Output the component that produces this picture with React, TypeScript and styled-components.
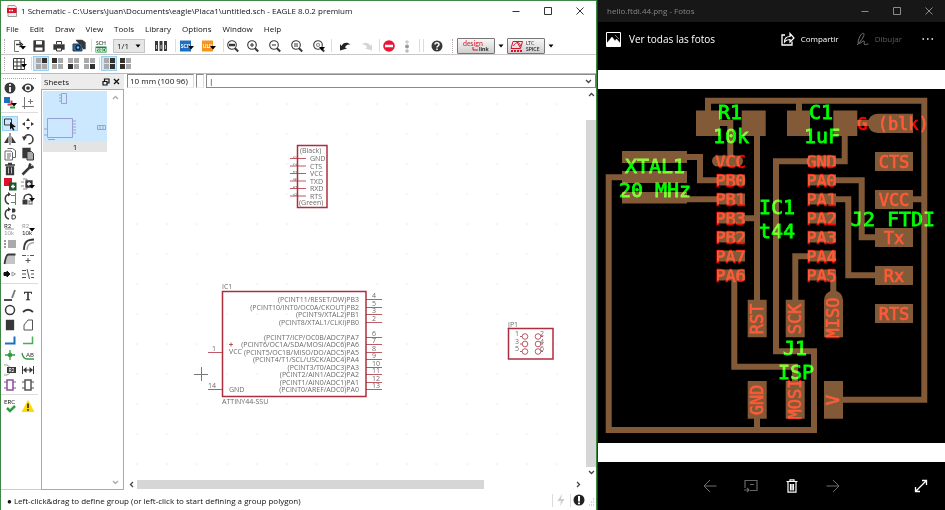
import React from "react";
import styled, { createGlobalStyle, css } from "styled-components";

const Global = createGlobalStyle`
  *, *::before, *::after { box-sizing: border-box; }
  body { margin: 0; background: #000; }
  button, input, select { font: inherit; color: inherit; margin: 0; padding: 0; border: 0; background: none; }
  svg { display: block; flex: none; }
`;

const Desktop = styled.div`
  display: grid;
  grid-template-columns: minmax(0, 597fr) minmax(0, 348fr);
  height: 100vh;
  font-family: "Open Sans", "Noto Sans", sans-serif;
  font-size: 8px;
  color: #111;
`;

/* ---------- Schematic editor window ---------- */

const Editor = styled.section`
  display: flex;
  flex-direction: column;
  min-width: 0;
  min-height: 0;
  background: #fff;
  border: 1px solid #3f8747;
  border-bottom: 0;
`;

const TitleBar = styled.header<{ $dark?: boolean }>`
  display: flex;
  align-items: center;
  height: ${(p) => (p.$dark ? 22 : 20)}px;
  flex: none;
  padding-left: ${(p) => (p.$dark ? 9 : 5)}px;
  background: ${(p) => (p.$dark ? "#171717" : "#fff")};
  color: ${(p) => (p.$dark ? "#858585" : "#111")};
`;

const Title = styled.h1<{ $first?: boolean }>`
  margin: 0 0 0 ${(p) => (p.$first ? 0 : 3)}px;
  flex: 1;
  min-width: 0;
  font-size: 8px;
  line-height: 16px;
  font-weight: 400;
  white-space: nowrap;
  overflow: hidden;
`;

const WindowButton = styled.button`
  display: grid;
  place-items: center;
  width: 32px;
  height: 20px;
`;

const MenuBar = styled.nav`
  display: flex;
  align-items: center;
  gap: 11px;
  height: 16px;
  flex: none;
  padding-left: 5px;
`;

const MenuItem = styled.button`
  font-size: 8px;
  line-height: 16px;
`;

const ToolBar = styled.div<{ $line?: boolean }>`
  display: flex;
  align-items: center;
  flex: none;
  height: 18px;
  border-bottom: 1px solid ${(p) => (p.$line ? "#c8c8c8" : "transparent")};
`;

const Grip = styled.span`
  width: 1px;
  height: 14px;
  margin: 0 4px 0 3px;
  border-left: 1px dotted #b5a5ab;
`;

const Tool = styled.button<{ $w?: number; $on?: boolean }>`
  display: flex;
  align-items: center;
  justify-content: center;
  flex: none;
  width: ${(p) => p.$w ?? 20}px;
  height: 15px;
  ${(p) =>
    p.$on &&
    css`
      background: #cce8ff;
      box-shadow: inset 0 0 0 1px #99cfef;
    `}
`;

const Rule = styled.span`
  flex: none;
  width: 1px;
  height: 13px;
  margin: 0 1px 0 2px;
  background: #dcdcdc;
`;

const SheetPicker = styled.label`
  display: flex;
  align-items: center;
  width: 32px;
  height: 14px;
  margin: 0 4px;
  padding: 0 3px;
  background: #e6e6e6;
  border: 1px solid #c4c4c4;
  select {
    appearance: none;
    flex: 1;
    min-width: 0;
    font-size: 8px;
    line-height: 12px;
  }
`;

const LinkButton = styled.button`
  display: grid;
  place-items: center;
  width: 38px;
  height: 16px;
  background: linear-gradient(#f7f7f7, #cfcfcf);
  border: 1px solid #777;
  border-radius: 1px;
`;

const Work = styled.div`
  display: grid;
  grid-template-columns: 40px 83px minmax(0, 1fr);
  flex: 1;
  min-height: 0;
  border-top: 1px solid #bbb;
`;

const Palette = styled.aside`
  padding: 4px 3px 0 0;
  border-bottom: 1px solid #ccc;
`;

const PaletteGrip = styled.div`
  height: 2px;
  margin: 0 2px;
  border-top: 1px dotted #b5a5ab;
`;

const PaletteGroup = styled.div`
  display: grid;
  grid-template-columns: 18px 18px;
  grid-auto-rows: 15px;
  & + & {
    margin-top: 2px;
    padding-top: 3px;
    border-top: 1px solid #dcdcdc;
  }
  button {
    width: 16px;
    justify-self: center;
  }
`;

const Sheets = styled.aside`
  display: flex;
  flex-direction: column;
  min-height: 0;
`;

const SheetsHead = styled.h2`
  display: flex;
  align-items: center;
  flex: none;
  height: 15px;
  margin: 0;
  padding: 0 2px 0 3px;
  background: #ececec;
  font-size: 8px;
  line-height: 14px;
  font-weight: 400;
  span { flex: 1; }
  button { width: 11px; display: grid; place-items: center; }
`;

const SheetsBody = styled.div`
  display: flex;
  justify-content: space-between;
  flex: 1;
  min-height: 0;
  padding: 1px;
  border: 1px solid #aaa;
`;

const SheetThumb = styled.button`
  align-self: flex-start;
  width: 64px;
  background: #e4e4e4;
  font-size: 8px;
  line-height: 11px;
  svg { background: #cce8ff; }
`;

const ArrowColumn = styled.div`
  display: flex;
  flex-direction: column;
  justify-content: space-between;
  align-items: center;
  width: 14px;
  padding: 3px 0 2px;
`;

const Drawing = styled.div`
  display: flex;
  flex-direction: column;
  min-width: 0;
  min-height: 0;
`;

const CommandRow = styled.div`
  display: flex;
  flex: none;
  gap: 2px;
  height: 15px;
  padding: 0 0 1px 3px;
`;

const Readout = styled.output<{ $w: number }>`
  width: ${(p) => p.$w}px;
  flex: none;
  padding-left: 2px;
  border: 1px solid #888;
  border-right-color: #ddd;
  border-bottom-color: #eee;
  font-size: 8px;
  line-height: 12px;
  white-space: nowrap;
`;

const Command = styled.label`
  display: flex;
  align-items: center;
  flex: 1;
  min-width: 0;
  padding: 0 3px 0 2px;
  border: 1px solid #8a8a8a;
  border-right-color: #4a9a4a;
  input { flex: 1; min-width: 0; font-size: 8px; line-height: 12px; outline: 0; }
`;

const CanvasRow = styled.div`
  display: flex;
  flex: 1;
  min-height: 0;
`;

const Sheet = styled.svg`
  flex: 1 1 0;
  min-width: 0;
  height: 100%;
  overflow: hidden;
  font-family: "Open Sans", "Noto Sans", sans-serif;
  font-size: 7px;
`;

const VScroll = styled.div`
  display: flex;
  flex-direction: column;
  align-items: center;
  width: 10px;
  padding: 2px 0 3px;
`;

const VThumb = styled.div`
  flex: 1;
  width: 10px;
  margin: 22px 0 2px;
  background: #d6d6d6;
`;

const HScroll = styled.div`
  display: flex;
  align-items: center;
  flex: none;
  height: 11px;
  padding: 0 14px 0 4px;
`;

const HTrack = styled.div`
  flex: 1;
  height: 9px;
  margin: 0 4px 0 2px;
`;

const HThumb = styled.div`
  width: 80%;
  height: 9px;
  background: #d6d6d6;
`;

const StatusBar = styled.footer`
  display: flex;
  align-items: center;
  flex: none;
  height: 20px;
  padding-left: 6px;
  font-size: 8px;
  p { margin: 0; flex: 1; white-space: nowrap; overflow: hidden; }
`;

const ink = "#383838";
const blue = "#1e6fbf";
const green = "#2e9e3e";
const red = "#d8132b";

const Ico = ({ children, w = 14, h = 14 }: { children: React.ReactNode; w?: number; h?: number }) => (
  <svg
    width={w}
    height={h}
    viewBox={`0 0 ${w} ${h}`}
    fill="none"
    stroke={ink}
    strokeWidth="1.3"
    fontFamily="Lato, sans-serif"
    aria-hidden="true"
  >
    {children}
  </svg>
);

const Drop = ({ x = 8, y = 8 }: { x?: number; y?: number }) => (
  <path d={`M${x} ${y}h6l-3 3.5z`} fill="#000" stroke="none" />
);

const Caret = () => (
  <Ico w={6} h={4}>
    <path d="M0.5 0.5h5l-2.5 3z" fill="#000" stroke="none" />
  </Ico>
);

const Chevron = ({ dir, color = "#444" }: { dir: "up" | "down" | "left" | "right"; color?: string }) => {
  const d = {
    up: "M1 5l2.500-2.500 2.500 2.500",
    down: "M1 2l2.500 2.500 2.500-2.500",
    left: "M5 1l-2.500 2.500 2.500 2.500",
    right: "M2 1l2.500 2.500-2.500 2.500",
  }[dir];
  return (
    <Ico w={7} h={7}>
      <path d={d} stroke={color} />
    </Ico>
  );
};

const Lens = ({ children }: { children?: React.ReactNode }) => (
  <Ico>
    <circle cx="6" cy="6" r="4.300" fill="#fff" strokeWidth="1.100" />
    <path d="M9 9.300l3.200 3.200" strokeWidth="2" />
    <g strokeWidth="1.100">{children}</g>
  </Ico>
);

const Badge = ({ color, label }: { color: string; label: string }) => (
  <Ico w={16}>
    <path d="M1 1.500h11v11h-11z" fill={color} stroke="none" />
    <text x="6.500" y="9" fontSize="5" fontWeight="700" textAnchor="middle" fill="#fff" stroke="none">{label}</text>
    <Drop x={9} y={7} />
  </Ico>
);

const Quad = ({ dark }: { dark: number[] }) => (
  <Ico w={13} h={13}>
    {[0, 1, 2, 3].map((i) => (
      <rect
        key={i}
        x={1 + (i % 2) * 6}
        y={1 + Math.floor(i / 2) * 6}
        width="5"
        height="5"
        stroke="none"
        fill={dark.includes(i) ? "#303030" : "#a9a9a9"}
      />
    ))}
  </Ico>
);

const WindowControls = ({ color }: { color: string }) => (
  <>
    <WindowButton aria-label="Minimize"><Ico w={8} h={8}><path d="M0.500 4.500h7" stroke={color} strokeWidth="1" /></Ico></WindowButton>
    <WindowButton aria-label="Maximize"><Ico w={8} h={8}><path d="M0.500 0.500h7v7h-7z" stroke={color} strokeWidth="1" /></Ico></WindowButton>
    <WindowButton aria-label="Close"><Ico w={8} h={8}><path d="M0.500 0.500l7 7M7.500 0.500l-7 7" stroke={color} strokeWidth="1" /></Ico></WindowButton>
  </>
);

const ToolRowOne = () => (
  <ToolBar $line role="toolbar">
    <Grip />
    <Tool aria-label="Open">
      <Ico>
        <path d="M8 5V1.500H2.500v11H7" stroke="#777" strokeWidth="1" />
        <path d="M4 5.500h5M7.500 3l3 2.500-3 2.500" />
        <Drop x={8} y={7} />
      </Ico>
    </Tool>
    <Tool aria-label="Save">
      <Ico>
        <path d="M2 2h10v10H2z" fill={ink} strokeLinejoin="round" />
        <path d="M4 2h6v3.500H4zM3.500 8.500h7v3h-7z" fill="#fff" stroke="none" />
      </Ico>
    </Tool>
    <Tool aria-label="Print">
      <Ico>
        <path d="M2 6h10v4H2z" fill={ink} />
        <path d="M4.500 5V2.500h5V5M4.500 9h5v3h-5z" fill="#fff" strokeWidth="1" />
      </Ico>
    </Tool>
    <Tool aria-label="Export image">
      <Ico>
        <path d="M4 1.500h6l3 2v6h-2" fill={ink} stroke={ink} />
        <path d="M1 5h9v7H1z" fill={blue} stroke={ink} strokeWidth="1" />
        <circle cx="6" cy="8.500" r="2" fill="#79c7ef" stroke="#123" />
      </Ico>
    </Tool>
    <Rule />
    <Tool $w={16} aria-label="Board">
      <Ico>
        <text x="7" y="6" fontSize="5" fontWeight="700" textAnchor="middle" fill="#555" stroke="none">SCH</text>
        <path d="M1.500 7.500h11v6h-11z" fill="#16883a" stroke="none" />
        <text x="7" y="12.500" fontSize="5" fontWeight="700" textAnchor="middle" fill="#fff" stroke="none">BRD</text>
      </Ico>
    </Tool>
    <SheetPicker>
      <select aria-label="Sheet"><option>1/1</option></select>
      <Caret />
    </SheetPicker>
    <Tool $w={24} aria-label="Design manager">
      <Ico>
        {[1, 5.5, 10].map((x) => (
          <g key={x}>
            <path d={`M${x} 2h3v10h-3z`} fill={ink} stroke="none" />
            <path d={`M${x + 1} 6h1v4h-1z`} fill="#bbb" stroke="none" />
          </g>
        ))}
      </Ico>
    </Tool>
    <Rule />
    <Tool aria-label="Run script"><Badge color={blue} label="SCR" /></Tool>
    <Tool $w={24} aria-label="Run ULP"><Badge color="#f7941e" label="ULP" /></Tool>
    <Rule />
    <Tool $w={16} aria-label="Fit"><Lens><path d="M3 6h6" strokeWidth="2.500" /></Lens></Tool>
    <Tool $w={24} aria-label="Zoom in"><Lens><path d="M4 6h4M6 4v4" /></Lens></Tool>
    <Tool aria-label="Zoom out"><Lens><path d="M4 6h4" /></Lens></Tool>
    <Tool $w={24} aria-label="Redraw"><Lens><path d="M4 5h4M4 7h4" /></Lens></Tool>
    <Tool aria-label="Zoom select"><Lens><circle cx="6" cy="6" r="1.500" stroke="#888" /><Drop x={7} y={8} /></Lens></Tool>
    <Rule />
    <Tool $w={24} aria-label="Undo"><Ico><path d="M3.500 7C5 3.500 9 2.500 12.500 5.500 9.500 5 8 6 7 8.500l2 1-7 2L2 5z" fill="#222" stroke="none" /></Ico></Tool>
    <Tool aria-label="Redo"><Ico><path d="M10.500 7C9 3.500 5 2.500 1.500 5.500 4.500 5 6 6 7 8.500l-2 1 7 2L12 5z" fill="#d5d5d5" stroke="none" /></Ico></Tool>
    <Rule />
    <Tool $w={16} aria-label="Stop">
      <Ico><circle cx="7" cy="7" r="5.800" fill="#ea1635" stroke="none" /><path d="M3 7h8" stroke="#fff" strokeWidth="2.500" /></Ico>
    </Tool>
    <Tool aria-label="Traffic light">
      <Ico><circle cx="7" cy="3" r="1.800" fill="#ccc" stroke="none" /><circle cx="7" cy="7.500" r="2" fill="#999" stroke="none" /><circle cx="7" cy="12" r="1.800" fill="#bbb" stroke="none" /></Ico>
    </Tool>
    <Rule />
    <Rule />
    <Tool $w={24} aria-label="Help">
      <Ico><circle cx="7" cy="7" r="5.500" fill={ink} stroke="none" /><path d="M5 5.500c0-2.500 4-2.300 4 0 0 1.500-2 1.500-2 3M7 9.500v1.500" stroke="#fff" strokeWidth="1.500" /></Ico>
    </Tool>
    <Grip />
    <LinkButton aria-label="Design link">
      <Ico w={34} h={14}>
        <text x="4" y="7" fontSize="7" fill={red} stroke="none">design</text>
        <path d="M14 8v3h5" stroke={red} strokeWidth="1" />
        <text x="20" y="12" fontSize="6" fontWeight="700" fill="#222" stroke="none">link</text>
      </Ico>
    </LinkButton>
    <Tool $w={12} aria-label="Design link options"><Caret /></Tool>
    <LinkButton aria-label="LTC Spice">
      <Ico w={34} h={14}>
        <path d="M4 2.500h9.500l-2 7H2zM4.500 7C7 2 11 3 11.500 7M8 3l3.500 6" stroke={red} strokeWidth="1" />
        <path d="M2 12h11" stroke={red} strokeWidth="2" strokeDasharray="2 1" />
        <text x="17" y="6" fontSize="5" fill="#333" stroke="none">LTC</text>
        <text x="17" y="12" fontSize="5" fontWeight="700" fill="#333" stroke="none">SPICE</text>
      </Ico>
    </LinkButton>
    <Tool $w={12} aria-label="LTC Spice options"><Caret /></Tool>
  </ToolBar>
);

const ToolRowTwo = () => (
  <ToolBar role="toolbar">
    <Grip />
    <Tool aria-label="Grid">
      <Ico w={15}><path d="M1.500 1.500h11v11h-11zM1.500 5h11M1.500 9h11M5 1.500v11M9 1.500v11" strokeWidth="1" /><Drop x={9} y={7} /></Ico>
    </Tool>
    <Rule />
    <Tool $w={16} $on aria-label="Layer preset 1"><Quad dark={[1]} /></Tool>
    <Tool $w={16} aria-label="Layer preset 2"><Quad dark={[0]} /></Tool>
    <Tool $w={16} aria-label="Layer preset 3"><Quad dark={[2]} /></Tool>
    <Tool $w={16} aria-label="Layer preset 4"><Quad dark={[3]} /></Tool>
    <Rule />
    <Tool $w={16} $on aria-label="Layer preset 5"><Quad dark={[1, 3]} /></Tool>
    <Tool $w={16} aria-label="Layer preset 6"><Quad dark={[0, 2]} /></Tool>
  </ToolBar>
);

type PaletteItem = [string, React.ReactNode] | null;

const chip = (c: string) => (
  <g stroke={c} strokeWidth="1.200">
    <path d="M4 2h6v10H4z" strokeWidth="1.500" />
    <path d="M1 4h3M1 10h3M10 4h3M10 10h3" />
  </g>
);

const paletteGroups: PaletteItem[][] = [
  [
    ["Info", <><circle cx="7" cy="7" r="5.500" fill={ink} stroke="none" /><path d="M7 6v5M7 3v1.800" stroke="#fff" strokeWidth="1.800" /></>],
    ["Show", <><path d="M1.500 7c3-5 8-5 11 0-3 5-8 5-11 0z" fill={ink} /><circle cx="7" cy="7" r="2.500" fill={ink} stroke="#fff" /></>],
    ["Layers", <><path d="M1 1h6v6H1z" fill={blue} stroke="none" /><path d="M4.500 8.500h4v-4" stroke="#d8304f" strokeWidth="2" /><path d="M7 11.500h5" stroke={green} strokeWidth="2" /><Drop x={8} y={7} /></>],
    ["Mark", <path d="M3.500 1v12M1 10.500h12M9.500 3v5M7 5.500h5" stroke="#777" strokeWidth="1" />],
  ],
  [
    ["Group", <><path d="M1.500 2h7v6h-7z" strokeWidth="1" /><path d="M7 5l6 5-3 .3 1.500 2.700-1.500.5-1.200-2.600L7 12.500z" fill="#111" stroke="none" /></>],
    ["Move", <path d="M7 1l2 3H5zM7 13l2-3H5zM1 7l3-2v4zM13 7l-3-2v4z" fill={ink} stroke="none" />],
    ["Mirror", <><path d="M5.500 4v7H1zM8.500 4v7H13z" fill={ink} stroke="none" /><path d="M7 1v12" strokeWidth="1" /></>],
    ["Rotate", <><path d="M3 7a4.500 4.500 0 1 1 4.500 4.800" strokeWidth="1.500" /><path d="M1 4.500h5L3 9z" fill={ink} stroke="none" /></>],
    ["Copy", <><path d="M4.500 1.500h5l3 2v7h-3" stroke="#666" strokeWidth="1" /><path d="M2 4h6l1.500 1.500V13H2zM4 7h4M4 9h4M4 11h3" stroke="#666" strokeWidth="1" /></>],
    ["Paste", <><path d="M2 1.500h7v9H2z" fill={ink} /><path d="M6 4.500h4.500l2 2V13H6z" fill="#aaa" strokeWidth="1" /></>],
    ["Delete", <><path d="M2 3h10M5 1.500h4" strokeWidth="1.500" /><path d="M3.500 5v7.500h7V5z" fill={ink} /><path d="M5.500 5.500v6M8.500 5.500v6" stroke="#bbb" strokeWidth="1" /></>],
    ["Change", <path d="M1.500 12.500l7-7M12.500 4.500L10 5.500 8.500 4 9.500 1.500" strokeWidth="2.500" />],
    ["Add", <><path d="M1 1h8v8H1z" fill={red} stroke="none" /><path d="M6 5.500h7.500v8H6z" fill="#17552a" stroke="none" /><path d="M8 9.500h4M10 7.500v4" stroke="#fff" /></>],
    ["Replace", <><path d="M2 2h4v10H2M0 5h3M0 9h3" stroke="#888" strokeWidth="1" /><path d="M5 4h6v6H5z" fill={ink} /><path d="M6 7h4M8 5v4" stroke="#fff" /><Drop x={8} y={8} /></>],
    ["Pin swap", <><path d="M6 2.500C1 3 1 11 6 12" strokeWidth="1.500" /><path d="M5 0l3 2.500-3 2z" fill={ink} stroke="none" /><path d="M12.500 1v12M8 3.500h4M8 10.500h4" stroke="#5a8a60" strokeWidth="1" /></>],
    ["Lock", <><path d="M3 7c0-6 8-6 8-1" strokeWidth="1.500" /><path d="M1.500 7.500h5v5h-5z" fill={ink} stroke="none" /><path d="M8 9h3v3H8z" stroke="#888" /><Drop x={8} y={6} /></>],
    ["Gate swap", <><path d="M6 2.500C1 3 1 11 6 12" strokeWidth="1.500" /><path d="M5 0l3 2.500-3 2z" fill={ink} stroke="none" /><path d="M9 1.500h2a1.500 2 0 0 1 0 4H9z" fill={ink} stroke="none" /><path d="M9 8h2a1.500 2 0 0 1 0 4H9z" fill="#fff" strokeWidth="1" /></>],
    null,
    ["Name", <><text x="1" y="6" fontSize="6" fill="#222" stroke="none">R2</text><path d="M2 7h9" stroke="#999" strokeWidth="1" /><text x="1" y="13" fontSize="6" fill="#999" stroke="none">10k</text></>],
    ["Value", <><text x="1" y="6" fontSize="6" fill="#999" stroke="none">R2</text><text x="1" y="13" fontSize="6" fill="#222" stroke="none">10k</text><Drop x={8} y={6} /></>],
    ["Smash", <><path d="M5 3h8v8H5z" fill="#aaa" stroke="none" /><path d="M1 4h3M1 7h3M1 10h3" stroke="#777" strokeDasharray="2 1" /></>],
    ["Miter", <><path d="M3 13C3 5 6 2.500 13 2.500" strokeWidth="1.800" /><path d="M6 13c0-5 3-7 7-7.500" stroke="#aaa" /></>],
    ["Split", <><path d="M2 12c1-7 2-9 4-9h6v9z" fill="#c4c4c4" stroke="none" /><path d="M1.500 12c1-7 2-9.500 4-9.500h7" strokeWidth="1.800" /></>],
    ["Merge", <path d="M1 3.500h4M6.500 3.500h1M9 3.500h4M4.500 8.500h5M7 6v5" strokeWidth="1" stroke="#555" />],
    ["Invoke", <><path d="M1 5.500h3V4l3 3-3 3V8.500H1z" fill="#111" stroke="#111" strokeWidth="1" /><path d="M9 5l3.500 2L9 9z" stroke="#999" strokeWidth="1" /></>],
    ["Optimize", <path d="M1 3.500h4M1 7h4M1 10.500h4M6 2l2.500 10M9.500 3.500h3.500M10 7h3M10 10.500h3" stroke="#555" strokeWidth="1" />],
  ],
  [
    ["Line", <><path d="M1 12h8" strokeWidth="1.800" /><path d="M9 10l3-8" stroke="#777" strokeWidth="1.800" /></>],
    ["Text", <text x="7" y="12" fontSize="13" textAnchor="middle" fontFamily="Liberation Serif, serif" fill="#222" stroke="#222" strokeWidth="0.300">T</text>],
    ["Circle", <circle cx="7" cy="7" r="4.500" strokeWidth="1.500" />],
    ["Arc", <path d="M2 9c3-3 7-3 10 0" strokeWidth="1.800" />],
    ["Rectangle", <path d="M3.500 2.500h7v9h-7z" fill={ink} />],
    ["Polygon", <path d="M3 12V7l4-5h4.500v10z" stroke="#555" strokeWidth="1" />],
    ["Bus", <path d="M2 10.500h9.500v-7" stroke={blue} strokeWidth="2" />],
    ["Net", <path d="M2 10.500h9.500v-7" stroke="#48ad55" strokeWidth="1.500" />],
    ["Junction", <><path d="M2 7h10M7 2v10" stroke={green} /><circle cx="7" cy="7" r="2.300" fill={green} stroke="none" /></>],
    ["Label", <><path d="M1 5c1 5 3 6 5 6h7" stroke={green} /><text x="5" y="9" fontSize="6" fill="#333" stroke="none">AB</text></>],
    ["Attribute", <><path d="M1 2h3c5 2 5 8 0 10H1" stroke="#7bb184" strokeWidth="1" /><path d="M4 4h9v6H4z" fill={ink} stroke="none" /><text x="8.500" y="9" fontSize="5" textAnchor="middle" fill="#fff" stroke="none">R2</text></>],
    ["Dimension", <><path d="M1.500 3v8M12.500 3v8M3 7h8" strokeWidth="1" /><path d="M2 7l3.500-3v6zM12 7L8.500 4v6z" fill={ink} stroke="none" /></>],
    ["Frame module", chip("#8a4fa0")],
    ["Module", chip("#555")],
  ],
  [
    ["ERC", <><text x="1" y="5" fontSize="6" fill="#222" stroke="none">ERC</text><path d="M4 9l3 3 5-5" stroke={green} strokeWidth="2.500" /></>],
    ["Errors", <><path d="M7 1l6.500 12H.5z" fill="#ffd900" stroke="none" /><path d="M7 4.500v4.500M7 10v1.800" stroke="#222" strokeWidth="1.500" /></>],
  ],
];

const dark = "#6a6a6a";
const maroon = "#ad2f3d";

const connectorPins = ["GND", "CTS", "VCC", "TXD", "RXD", "RTS"];

const chipPins: [number, string, string][] = [
  [299, "(PCINT11/RESET/DW)PB3", "4"],
  [307, "(PCINT10/INT0/OC0A/CKOUT)PB2", "5"],
  [314, "(PCINT9/XTAL2)PB1", "3"],
  [322, "(PCINT8/XTAL1/CLKI)PB0", "2"],
  [337, "(PCINT7/ICP/OC0B/ADC7)PA7", "6"],
  [344, "(PCINT6/OC1A/SDA/MOSI/ADC6)PA6", "7"],
  [352, "(PCINT5/OC1B/MISO/DO/ADC5)PA5", "8"],
  [359, "(PCINT4/T1/SCL/USCK/ADC4)PA4", "9"],
  [367, "(PCINT3/T0/ADC3)PA3", "10"],
  [374, "(PCINT2/AIN1/ADC2)PA2", "11"],
  [382, "(PCINT1/AIN0/ADC1)PA1", "12"],
  [389, "(PCINT0/AREF/ADC0)PA0", "13"],
];

const Schematic = () => (
  <Sheet aria-label="Schematic sheet">
    <defs>
      <pattern id="grid" width="30" height="30" patternUnits="userSpaceOnUse">
        <path d="M12 15h2" stroke="#ececec" />
      </pattern>
    </defs>
    <rect width="100%" height="100%" fill="url(#grid)" />
    <g transform="translate(-124 -89)" fill={dark}>
      <g fill="none" stroke={maroon} strokeWidth="1.500">
        <path d="M297.500 145.500h29.500v62h-29.500z" />
        <path d="M222.500 291.500h143.500v105h-143.500z" />
        <path d="M508.500 328.500h44.500v30.500h-44.500z" />
      </g>

      <text x="300" y="153">(Black)</text>
      <text x="299" y="205">(Green)</text>
      {connectorPins.map((name, i) => {
        const y = 158.5 + i * 7.5;
        return (
          <g key={name}>
            <path d={`M290 ${y}h16`} stroke={maroon} strokeWidth="0.800" />
            <text x="310" y={y + 2.5}>{name}</text>
            <text fontSize="5" transform={`translate(297 ${y}) rotate(-90)`}>{i + 1}</text>
          </g>
        );
      })}

      <text x="222" y="289">IC1</text>
      <text x="222" y="404">ATTINY44-SSU</text>
      {chipPins.map(([y, name, pin]) => (
        <g key={pin}>
          <path d={`M366 ${y + 0.5}h16`} stroke={maroon} strokeWidth="0.800" />
          <text x="359" y={y + 3} textAnchor="end">{name}</text>
          <text x="372" y={y - 1}>{pin}</text>
        </g>
      ))}
      <path d="M208 352.500h14M208 389.500h14" stroke={maroon} strokeWidth="0.800" />
      <text x="212" y="351">1</text>
      <text x="208" y="388">14</text>
      <path d="M229 344.500h4M231 342.500v4" stroke={maroon} strokeWidth="0.800" />
      <text x="229" y="354">VCC</text>
      <text x="229" y="392">GND</text>
      <path d="M194 374.500h14M201.500 367v14" stroke="#777" strokeWidth="1" />

      <text x="508" y="327">JP1</text>
      {[0, 1, 2].map((i) => (
        <g key={i}>
          <circle cx="525" cy={336.5 + i * 7.5} r="2.800" fill="none" stroke={maroon} strokeWidth="0.800" />
          <circle cx="538" cy={336.5 + i * 7.5} r="2.800" fill="none" stroke={maroon} strokeWidth="0.800" />
          <path d={`M520 ${336.5 + i * 7.5}h2M541 ${336.5 + i * 7.5}h2`} stroke={maroon} strokeWidth="0.800" />
          <text x="515" y={336 + i * 7.5}>{i * 2 + 1}</text>
          <text x="540" y={336 + i * 7.5}>{i * 2 + 2}</text>
        </g>
      ))}
    </g>
  </Sheet>
);

const menus = ["File", "Edit", "Draw", "View", "Tools", "Library", "Options", "Window", "Help"];

const EditorWindow = () => (
  <Editor>
    <TitleBar>
      <Ico w={12} h={14}>
        <path d="M2 1.500h7l1.500 2v9H2z" fill="#eee" stroke="#999" strokeWidth="1" />
        <path d="M1 4h9.500v5H1z" fill={red} stroke="none" />
        <path d="M3 6.500h5" stroke="#fff" strokeDasharray="1.500 1" />
      </Ico>
      <Title>1 Schematic - C:\Users\Juan\Documents\eagle\Placa1\untitled.sch - EAGLE 8.0.2 premium</Title>
      <WindowControls color="#333" />
    </TitleBar>
    <MenuBar>{menus.map((m) => <MenuItem key={m}>{m}</MenuItem>)}</MenuBar>
    <ToolRowOne />
    <ToolRowTwo />
    <Work>
      <Palette>
        <PaletteGrip />
        {paletteGroups.map((group, g) => (
          <PaletteGroup key={g}>
            {group.map((item, i) =>
              item ? (
                <Tool key={item[0]} $on={item[0] === "Group"} aria-label={item[0]}>
                  <Ico>{item[1]}</Ico>
                </Tool>
              ) : (
                <span key={i} />
              )
            )}
          </PaletteGroup>
        ))}
      </Palette>
      <Sheets>
        <SheetsHead>
          <span>Sheets</span>
          <button aria-label="Float panel"><Ico w={8} h={8}><path d="M2.500 3V1h4.500v4H5M1 3.500h4v3.500H1z" strokeWidth="1.200" stroke="#111" /></Ico></button>
          <button aria-label="Close panel"><Ico w={7} h={7}><path d="M1 1l5 5M6 1L1 6" stroke="#111" /></Ico></button>
        </SheetsHead>
        <SheetsBody>
          <SheetThumb>
            <svg width="64" height="50" viewBox="0 0 64 50" fill="none" stroke="#9a9fd6" strokeWidth="1" aria-hidden="true">
              <path d="M18.500 2.500h5v10h-5zM16 4h2M16 7h2M16 10h2M4.500 27.500h25v19h-25zM30 30h3M30 33h3M30 36h3M30 39h3M30 42h3M1 38h3M1 44h3M5 48.500h7M54.500 34.500h8v4h-8zM57 34v5M60 34v5" />
            </svg>
            1
          </SheetThumb>
          <ArrowColumn>
            <Chevron dir="up" color="#aaa" />
            <Chevron dir="down" color="#aaa" />
          </ArrowColumn>
        </SheetsBody>
      </Sheets>
      <Drawing>
        <CommandRow>
          <Readout $w={67}>10 mm (100 96)</Readout>
          <Readout $w={8} />
          <Command>
            <input aria-label="Command line" defaultValue="|" />
            <Chevron dir="down" />
          </Command>
        </CommandRow>
        <CanvasRow>
          <Schematic />
          <VScroll>
            <Chevron dir="up" />
            <VThumb />
            <Chevron dir="down" />
          </VScroll>
        </CanvasRow>
        <HScroll>
          <Chevron dir="left" />
          <HTrack><HThumb /></HTrack>
          <Chevron dir="right" />
        </HScroll>
      </Drawing>
    </Work>
    <StatusBar>
      <p>● Left-click&amp;drag to define group (or left-click to start defining a group polygon)</p>
      <Rule />
      <Ico><path d="M8 1L3.500 8H7l-1 5 4.500-7H7z" fill="#ccc" stroke="none" /></Ico>
      <Rule />
      <Ico><circle cx="7" cy="7" r="5.500" fill="#222" stroke="none" /><path d="M7 3v5.500M7 9.500v1.800" stroke="#fff" strokeWidth="2" /></Ico>
      <Ico w={10}><path d="M7 6h1M5 9h1M7 9h1M3 12h1M5 12h1M7 12h1" stroke="#aaa" strokeWidth="1" /></Ico>
    </StatusBar>
  </Editor>
);

/* ---------- Photo viewer window ---------- */

const Photos = styled.section`
  display: flex;
  flex-direction: column;
  min-width: 0;
  min-height: 0;
  background: #000;
  color: #fff;
  border-left: 1px solid #24402a;
`;

const PhotoBar = styled.div`
  display: flex;
  align-items: center;
  height: 48px;
  flex: none;
  padding: 0 11px 14px 8px;
`;

const Action = styled.button<{ $size?: number; $dim?: boolean; $gap?: number; $ml?: number }>`
  display: flex;
  align-items: center;
  gap: ${(p) => p.$gap ?? 4}px;
  margin-left: ${(p) => p.$ml ?? 0}px;
  font-size: ${(p) => p.$size ?? 8}px;
  line-height: 16px;
  white-space: nowrap;
  color: ${(p) => (p.$dim ? "#5c5c5c" : "#fff")};
`;

const Spacer = styled.span`
  flex: 1;
`;

const Photo = styled.figure`
  display: flex;
  flex-direction: column;
  flex: 1;
  min-height: 0;
  margin: 0;
  padding: 19px 0;
  background: #fff;
`;

const Board = styled.svg`
  width: 100%;
  flex: 1 1 0;
  min-height: 0;
  background: #000;
  font-family: "DejaVu Sans Mono", monospace;
  text { mix-blend-mode: screen; }
`;

const PhotoFooter = styled.footer`
  display: grid;
  grid-template-columns: 1fr repeat(4, 41px) 1fr;
  align-items: center;
  justify-items: center;
  height: 48px;
  flex: none;
  button:last-child { justify-self: end; margin-right: 17px; }
`;

const copper = "#835a37";

const leftPads = ["VCC", "PB0", "PB1", "PB3", "PB2", "PA7", "PA6"];
const rightPads = ["GND", "PA0", "PA1", "PA2", "PA3", "PA4", "PA5"];
const ftdiPads = ["CTS", "VCC", "Tx", "Rx", "RTS"];

const silk: [string, number, number][] = [
  ["R1", 730, 119],
  ["10k", 731, 143],
  ["C1", 821, 119],
  ["1uF", 822, 143],
  ["XTAL1", 655, 173],
  ["20 MHz", 655, 197],
  ["IC1", 777, 214],
  ["t44", 777, 238],
  ["J2 FTDI", 893, 226],
  ["J1", 795, 355],
  ["ISP", 796, 379],
];

const ispLabels: [string, number, number][] = [
  ["RST", 757, 319],
  ["SCK", 795, 319],
  ["MISO", 833, 318],
  ["GND", 757, 400],
  ["MOSI", 795, 399],
  ["V", 833, 400],
];

const BoardImage = () => (
  <Board viewBox="598 89 347 354" preserveAspectRatio="xMidYMid meet" aria-label="Board layout">
    <g fill="none" stroke={copper} strokeWidth="6" strokeLinejoin="miter">
      <path d="M708 112V100.700H924.300V399.700H842M799 101v10" />
      <path d="M719 123H730.300V161M757 135V300" />
      <path d="M844.700 135V161.300H776V351.300H814V430H608.700V177.300H623M757 418v12" />
      <path d="M687 157H700V180.300H717M687 199.300H717M745 218.300H757" />
      <path d="M734.300 279V366.700H795V382" />
      <path d="M834 180.300H861.700V237.300H876M834 199.300H848.300V275.300H876" />
      <path d="M810 256.300H795.300V300M833.300 276V295M912 199.300H924M856 123H870" />
    </g>
    <g fill={copper}>
      <path d="M696 110.500h24v25.500h-24zM741.700 110.500h24v25.500h-24zM787 110.500h23v25.500h-23zM833.300 110.500h24v25.500h-24z" />
      <path d="M622 151h65v12h-65zM622 171h65v12h-65zM622 192h65v11.500h-65z" />
      {leftPads.map((p, i) => (
        <rect key={p} x={i ? 717 : 712} y={155.5 + i * 19} width={i ? 28 : 31} height="11" rx={i ? 0 : 5.5} />
      ))}
      {rightPads.map((p, i) => (
        <rect key={p} x="808" y={155.5 + i * 19} width="28" height="11" />
      ))}
      {ftdiPads.map((p, i) => (
        <rect key={p} x="875" y={152 + i * 38} width="38" height="19" />
      ))}
      <path d="M913 113.700H877.500a9.600 9.600 0 0 0 0 19.300H913z" />
      <path d="M747.700 299.700h19v37.500h-19zM785.700 299.700h19v37.500h-19zM824 337.200V300a9.500 9.500 0 0 1 19 0v37.200z" />
      <path d="M747.700 381h19v37.700h-19zM785.700 381h19v37.700h-19zM824 381h19v37.700h-19z" />
    </g>
    <g fill="#f00" stroke="#f00" strokeWidth="0.700" fontSize="17" textAnchor="middle">
      {leftPads.map((p, i) => <text key={p} x="730.500" y={167.5 + i * 19}>{p}</text>)}
      {rightPads.map((p, i) => <text key={p} x="821.500" y={167.5 + i * 19}>{p}</text>)}
      {ftdiPads.map((p, i) => <text key={p} x="894" y={168 + i * 38}>{p}</text>)}
      <text x="893" y="130">G (blk)</text>
      {ispLabels.map(([t, x, y]) => (
        <text key={t} transform={`translate(${x + 6} ${y}) rotate(-90)`}>{t}</text>
      ))}
    </g>
    <g fill="#0f0" stroke="#0f0" strokeWidth="0.800" fontSize="20" textAnchor="middle">
      {silk.map(([t, x, y]) => <text key={t} x={x} y={y}>{t}</text>)}
    </g>
  </Board>
);

const PhotosWindow = () => (
  <Photos>
    <TitleBar $dark>
      <Title $first>hello.ftdi.44.png - Fotos</Title>
      <WindowControls color="#8a8a8a" />
    </TitleBar>
    <PhotoBar>
      <Action $size={10} $gap={8}>
        <Ico w={15} h={15}>
          <path d="M0.500 0.500h14v14H0.500z" stroke="#fff" strokeWidth="1" />
          <path d="M1 11l5-6 3 4 1.500-2L14 11v3.500H1zM9 3l4 4" fill="#fff" stroke="#fff" strokeWidth="0.500" />
        </Ico>
        Ver todas las fotos
      </Action>
      <Spacer />
      <Action $gap={6}>
        <Ico>
          <path d="M4 3H1v10h10V9.500" stroke="#fff" />
          <path d="M3.500 10c0-4 2.500-5.500 5.500-5.500V1.500l4 4.500-4 4V7.500c-2.500 0-4 .5-5.500 2.500z" stroke="#fff" strokeWidth="1.200" />
        </Ico>
        Compartir
      </Action>
      <Action $dim $gap={6} $ml={16}>
        <Ico>
          <path d="M2 13C5 10 9 5 9 2.500S6 1 4 6.500c-1.500 4-1 6 .5 5 2-1 3.500-3 4.500-2.500s-.5 3 .5 3.500 2-.5 4-.5" stroke="#777" strokeWidth="1" />
        </Ico>
        Dibujar
      </Action>
      <Action $ml={20} aria-label="More">
        <Ico w={12} h={4}><path d="M0.500 2h1.500M5 2h1.500M9.500 2h1.500" stroke="#fff" strokeWidth="1.500" /></Ico>
      </Action>
    </PhotoBar>
    <Photo><BoardImage /></Photo>
    <PhotoFooter>
      <span />
      <Action aria-label="Previous"><Ico><path d="M13.500 7H1M7 1L1 7l6 6" stroke="#707070" strokeWidth="1" /></Ico></Action>
      <Action aria-label="Slideshow"><Ico><path d="M1 9V1.500h12v10H6M6 5.500h4M0 11h5M3 9l2 2-2 2" stroke="#666" strokeWidth="1.200" /></Ico></Action>
      <Action aria-label="Delete"><Ico><path d="M1.500 2.500h11M5 2V.8h4V2M3 3v10.200h8V3M5.500 5v6.500M7 5v6.500M8.500 5v6.500" stroke="#fff" strokeWidth="1.200" /></Ico></Action>
      <Action aria-label="Next"><Ico><path d="M.5 7H13M7 1l6 6-6 6" stroke="#707070" strokeWidth="1" /></Ico></Action>
      <Action aria-label="Full screen"><Ico><path d="M1.500 12.500l11-11M8 1.500h4.500V6M1.500 8v4.500H6" stroke="#fff" /></Ico></Action>
    </PhotoFooter>
  </Photos>
);

export default function App() {
  return (
    <>
      <Global />
      <Desktop>
        <EditorWindow />
        <PhotosWindow />
      </Desktop>
    </>
  );
}
